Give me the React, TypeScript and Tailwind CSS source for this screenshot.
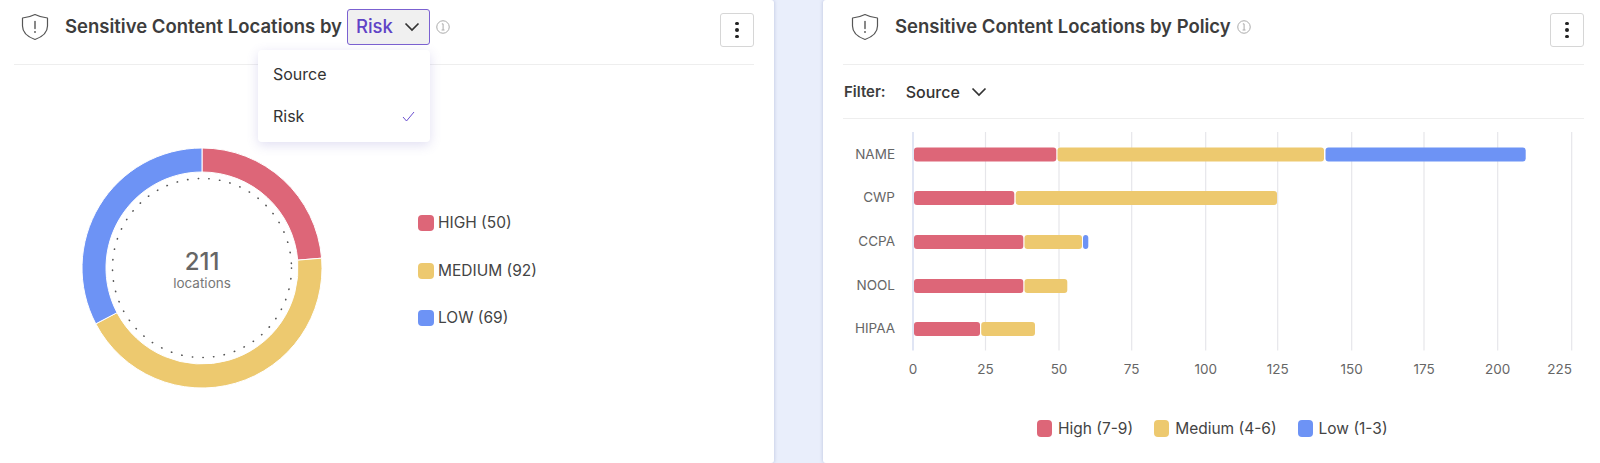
import React from "react";

const RED = "#dd6678";
const YELLOW = "#edc96f";
const BLUE = "#6d93f5";

function Shield() {
  return (
    <svg width="28" height="28" viewBox="0 0 28 28" fill="none" stroke="#555" strokeWidth="1.2" className="shrink-0">
      <path d="M14 1.5C10 3.5 5.5 4.7 1.5 5V13C1.5 19.5 7 24 14 26.5C21 24 26.5 19.5 26.5 13V5C22.5 4.7 18 3.5 14 1.5Z" strokeLinejoin="round" />
      <path d="M14 8.5V15.5" strokeLinecap="round" strokeWidth="1.4" />
      <circle cx="14" cy="19" r="0.9" fill="#555" stroke="none" />
    </svg>
  );
}

function Info() {
  return (
    <svg width="14" height="14" viewBox="0 0 13 13" fill="none" stroke="#a8a8a8" strokeWidth="0.9" className="shrink-0 block">
      <circle cx="6.5" cy="6.5" r="5.8" />
      <path d="M5.4 3.6H6.6V9.2M5.2 9.3H7.9" strokeWidth="0.9" />
    </svg>
  );
}

function Chevron({ color = "#333" }: { color?: string }) {
  return (
    <svg width="16" height="10" viewBox="0 0 16 10" fill="none" stroke={color} strokeWidth="1.7" className="shrink-0 block">
      <path d="M1.5 1.5L8 8L14.5 1.5" />
    </svg>
  );
}

function MoreButton() {
  return (
    <button className="w-[34px] h-[34px] rounded-[3px] border border-[#d6d6d6] bg-white flex flex-col items-center justify-center gap-[3px] shrink-0">
      <span className="w-[3.5px] h-[3.5px] rounded-full bg-[#222]" />
      <span className="w-[3.5px] h-[3.5px] rounded-full bg-[#222]" />
      <span className="w-[3.5px] h-[3.5px] rounded-full bg-[#222]" />
    </button>
  );
}

function arc(a0: number, a1: number, R: number, r: number, c: number) {
  const p = (rad: number, a: number) => {
    const t = ((a - 90) * Math.PI) / 180;
    return `${(c + rad * Math.cos(t)).toFixed(2)} ${(c + rad * Math.sin(t)).toFixed(2)}`;
  };
  const large = a1 - a0 > 180 ? 1 : 0;
  return `M${p(R, a0)}A${R} ${R} 0 ${large} 1 ${p(R, a1)}L${p(r, a1)}A${r} ${r} 0 ${large} 0 ${p(r, a0)}Z`;
}

function Donut() {
  const vals: [number, string][] = [
    [50, RED],
    [92, YELLOW],
    [69, BLUE],
  ];
  let a = 0;
  return (
    <svg width="242" height="242" viewBox="0 0 242 242" className="shrink-0">
      {vals.map(([v, col]) => {
        const start = a;
        a += (v / 211) * 360;
        return <path key={col} d={arc(start, a, 120, 96, 121)} fill={col} stroke="#fff" strokeWidth="1" />;
      })}
      <circle cx="121" cy="121" r="89.5" fill="none" stroke="#555" strokeWidth="1.6" strokeLinecap="round" strokeDasharray="0.3 10.4" />
      <text x="121" y="123" textAnchor="middle" fontSize="24" fontWeight="500" fill="#666" fontFamily="Inter, sans-serif">211</text>
      <text x="121" y="141" textAnchor="middle" fontSize="13.5" fill="#777" fontFamily="Inter, sans-serif">locations</text>
    </svg>
  );
}

const ticks = [0, 25, 50, 75, 100, 125, 150, 175, 200, 225];
const tickX = [913, 985.5, 1059, 1131.7, 1205.7, 1277.7, 1351.7, 1424, 1497.7, 1571.7];

const rows: { label: string; y: number; bars: [number, number, string][] }[] = [
  { label: "NAME", y: 154.5, bars: [[914, 1056.3, RED], [1057.5, 1324, YELLOW], [1325.5, 1525.7, BLUE]] },
  { label: "CWP", y: 198, bars: [[914, 1014.3, RED], [1015.7, 1277, YELLOW]] },
  { label: "CCPA", y: 242, bars: [[914, 1023.3, RED], [1024.5, 1082, YELLOW], [1083, 1088.3, BLUE]] },
  { label: "NOOL", y: 286, bars: [[914, 1023.3, RED], [1024.5, 1067.3, YELLOW]] },
  { label: "HIPAA", y: 329, bars: [[914, 980, RED], [981.2, 1035, YELLOW]] },
];

function BarChart() {
  return (
    <svg width="740" height="270" viewBox="843 119 740 270" className="block" fontFamily="Inter, sans-serif">
      {tickX.slice(1).map((x) => (
        <line key={x} x1={x} x2={x} y1="132" y2="350.5" stroke="#e6e6ea" strokeWidth="1.2" />
      ))}
      <line x1="913" x2="913" y1="132" y2="350.5" stroke="#d9dff2" strokeWidth="1.6" />
      {rows.map((r) => (
        <g key={r.label}>
          <text x="895" y={r.y + 0.8} textAnchor="end" dominantBaseline="middle" fontSize="13.5" fill="#666">{r.label}</text>
          {r.bars.map(([x0, x1, c]) => (
            <rect key={x0} x={x0} y={r.y - 7} width={x1 - x0} height="14" rx="3" fill={c} />
          ))}
        </g>
      ))}
      {ticks.map((t, i) => (
        <text
          key={t}
          x={i === 9 ? 1572 : tickX[i]}
          y="370"
          textAnchor={i === 9 ? "end" : "middle"}
          dominantBaseline="middle"
          fontSize="13.5"
          fill="#666"
        >
          {t}
        </text>
      ))}
    </svg>
  );
}

function LegendItem({ color, label }: { color: string; label: string }) {
  return (
    <div className="flex items-center gap-[6px]">
      <span className="w-[15px] h-[17px] rounded-[4px]" style={{ backgroundColor: color }} />
      <span className="text-[15.5px] text-[#444] leading-none">{label}</span>
    </div>
  );
}

function DonutLegend({ color, label }: { color: string; label: string }) {
  return (
    <div className="flex items-center gap-[4px] h-[16px]">
      <span className="w-[16px] h-[16px] rounded-[4px]" style={{ backgroundColor: color }} />
      <span className="text-[15.5px] text-[#444] leading-none">{label}</span>
    </div>
  );
}

export default function App() {
  return (
    <div className="w-[1600px] h-[463px] overflow-hidden flex bg-[#e9eefb] font-['Inter',sans-serif]">
      <section className="relative w-[774px] h-full bg-white rounded-r-[3px] shadow-[1px_0_3px_rgba(120,130,180,0.25)] pl-[14px] pr-[20px]">
        <header className="h-[65px] border-b border-[#eeeeee] flex items-start justify-between">
          <div className="flex items-center h-[54px] pl-[7px]">
            <Shield />
            <h2 className="ml-[16px] text-[18.5px] font-semibold text-[#3d3d3d] whitespace-nowrap">Sensitive Content Locations by</h2>
            <button className="ml-[5px] w-[83px] h-[36px] rounded-[3px] border border-[#7b61d1] bg-[#f0f0f0] flex items-center pl-[8px] gap-[11px]">
              <span className="text-[18.5px] font-medium text-[#5f43c6]">Risk</span>
              <Chevron />
            </button>
            <span className="ml-[6px]"><Info /></span>
          </div>
          <div className="pt-[13px]"><MoreButton /></div>
        </header>
        <div className="flex items-start pt-[82px] pl-[67px]">
          <Donut />
          <div className="ml-[95px] mt-[68px] flex flex-col gap-[31.5px]">
            <DonutLegend color={RED} label="HIGH (50)" />
            <DonutLegend color={YELLOW} label="MEDIUM (92)" />
            <DonutLegend color={BLUE} label="LOW (69)" />
          </div>
        </div>
        <div className="absolute left-[258px] top-[50px] w-[172px] h-[92px] bg-white rounded-[4px] shadow-[0_3px_12px_rgba(100,90,190,0.2)] pl-[15px] pr-[15px] text-[16px] text-[#333]">
          <div className="h-[48px] flex items-center">Source</div>
          <div className="h-[36px] flex items-center justify-between">
            <span>Risk</span>
            <svg width="13" height="11" viewBox="0 0 13 11" fill="none" stroke="#6a4fd0" strokeWidth="1"><path d="M1 6L4.5 10L12 1" /></svg>
          </div>
        </div>
      </section>
      <section className="ml-[49px] flex-1 h-full bg-white rounded-l-[3px] shadow-[-1px_0_3px_rgba(120,130,180,0.25)] pl-[20px] pr-[16px]">
        <header className="h-[65px] border-b border-[#eeeeee] flex items-start justify-between">
          <div className="flex items-center h-[54px] pl-[8px]">
            <Shield />
            <h2 className="ml-[16px] text-[18.5px] font-semibold text-[#3d3d3d] whitespace-nowrap">Sensitive Content Locations by Policy</h2>
            <span className="ml-[6px]"><Info /></span>
          </div>
          <div className="pt-[13px]"><MoreButton /></div>
        </header>
        <div className="h-[54px] border-b border-[#eeeeee] flex items-center pt-[1px]">
          <span className="ml-[1px] text-[15px] font-semibold text-[#3d3d3d]">Filter:</span>
          <span className="ml-[20px] text-[16px] font-medium text-[#333]">Source</span>
          <span className="ml-[11px]"><Chevron /></span>
        </div>
        <BarChart />
        <div className="flex items-center gap-[21px] pl-[194px] pt-[31px]">
          <LegendItem color={RED} label="High (7-9)" />
          <LegendItem color={YELLOW} label="Medium (4-6)" />
          <LegendItem color={BLUE} label="Low (1-3)" />
        </div>
      </section>
    </div>
  );
}
